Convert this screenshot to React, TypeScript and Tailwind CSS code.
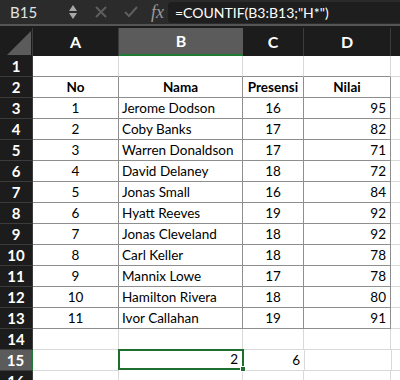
import React from "react";

const rows: [string, string, string, string][] = [
  ["1", "Jerome Dodson", "16", "95"],
  ["2", "Coby Banks", "17", "82"],
  ["3", "Warren Donaldson", "17", "71"],
  ["4", "David Delaney", "18", "72"],
  ["5", "Jonas Small", "16", "84"],
  ["6", "Hyatt Reeves", "19", "92"],
  ["7", "Jonas Cleveland", "18", "92"],
  ["8", "Carl Keller", "18", "78"],
  ["9", "Mannix Lowe", "17", "78"],
  ["10", "Hamilton Rivera", "18", "80"],
  ["11", "Ivor Callahan", "19", "91"],
];

const W = ["w-[86px]", "w-[124px]", "w-[61px]", "w-[87px]"];

function RowHead({ n, sel }: { n: number; sel?: boolean }) {
  return (
    <div
      className={
        "w-[33px] shrink-0 h-full flex items-center justify-center font-bold text-[15px] text-white border-b border-[#3c3c3c] " +
        (sel ? "bg-[#5b5b5b] border-r-2 border-r-[#1f7a34]" : "bg-[#1c1c1c] border-r border-r-[#3c3c3c]")
      }
    >
      {n}
    </div>
  );
}

export default function App() {
  const light = "border-[#d9d9d9]";
  const dark = "border-[#8e8e8e]";
  return (
    <div
      className="w-[400px] h-[380px] overflow-hidden bg-white select-none"
      style={{ fontFamily: "Lato, 'Noto Sans', sans-serif" }}
    >
      {/* Formula bar */}
      <div className="h-[24px] bg-[#2b2b2b] flex items-center">
        <div className="w-[66px] pl-[10px] text-[15px] text-[#e2e2e2]">B15</div>
        <div className="flex flex-col items-center justify-center w-[14px] gap-[2px]">
          <svg width="8" height="6" viewBox="0 0 8 6"><path d="M4 0L8 6H0Z" fill="#a8a8a8" /></svg>
          <svg width="8" height="6" viewBox="0 0 8 6"><path d="M0 0H8L4 6Z" fill="#a8a8a8" /></svg>
        </div>
        <svg width="12" height="12" viewBox="0 0 12 12" className="ml-[15px]">
          <path d="M1 1L11 11M11 1L1 11" stroke="#5e5e5e" strokeWidth="2" />
        </svg>
        <svg width="14" height="12" viewBox="0 0 14 12" className="ml-[17px]">
          <path d="M1 6L5 10L13 1" stroke="#5e5e5e" strokeWidth="2" fill="none" />
        </svg>
        <div
          className="ml-[13px] text-[18px] italic text-[#9a9a9a] leading-none"
          style={{ fontFamily: "'Liberation Serif', serif" }}
        >
          fx
        </div>
        <div className="ml-[4px] flex-1 h-[21px] bg-[#1e1e1e] rounded-l-[4px] flex items-center pl-[7px] text-[14px] text-white">
          =COUNTIF(B3:B13;"H*")
        </div>
      </div>
      <div className="h-[2px] bg-[#555555]" />
      <div className="h-[2px] bg-[#1c1c1c]" />
      {/* Column header */}
      <div className="h-[28px] flex bg-[#1c1c1c]">
        <div className="w-[33px] shrink-0 border-r border-[#3c3c3c] flex items-end justify-end pr-[1px] pb-[1px] h-[28px]">
          <svg width="24" height="24" viewBox="0 0 24 24"><path d="M24 0V24H0Z" fill="#5b5b5b" /></svg>
        </div>
        {["A", "B", "C", "D"].map((c, i) => (
          <div
            key={c}
            className={
              W[i] +
              " shrink-0 h-full flex items-center justify-center font-bold text-[16px] text-white " +
              (c === "B" ? "bg-[#5b5b5b] border-b-2 border-[#1f7a34]" : "border-r border-[#3c3c3c]")
            }
          >
            {c}
          </div>
        ))}
        <div className="flex-1" />
      </div>
      {/* Rows */}
      {Array.from({ length: 16 }).map((_, ri) => {
        const r = ri + 1;
        const inTable = r >= 2 && r <= 13;
        const cells: React.ReactNode[] = [];
        for (let ci = 0; ci < 4; ci++) {
          let content: React.ReactNode = null;
          let align = "justify-center";
          let bold = "";
          if (r === 2) {
            content = ["No", "Nama", "Presensi", "Nilai"][ci];
            bold = "font-bold";
          } else if (r >= 3 && r <= 13) {
            const d = rows[r - 3];
            content = d[ci];
            if (ci === 1) align = "justify-start pl-[3px]";
            if (ci === 3) align = "justify-end pr-[4px]";
          } else if (r === 15) {
            if (ci === 1) {
              content = "2";
              align = "justify-end pr-[4px]";
            }
            if (ci === 2) {
              content = "6";
              align = "justify-end pr-[4px]";
            }
          }
          const sel = r === 15 && ci === 1;
          cells.push(
            <div
              key={ci}
              className={
                W[ci] +
                " shrink-0 h-full relative flex items-center whitespace-nowrap text-[13.5px] text-black border-r border-b " +
                align +
                " " +
                bold +
                " " +
                (inTable ? dark : light) +
                " " +
                (r === 1 ? "border-b-[#8e8e8e]" : "") +
                (sel ? " !border-2 !border-[#1e6e2d] -ml-[1px] -mt-[1px] h-[22px] w-[126px]" : "")
              }
            >
              {content}
              {sel && (
                <div className="absolute -right-[4px] -bottom-[4px] w-[6px] h-[6px] bg-[#1e6e2d] border border-white z-10" />
              )}
            </div>
          );
        }
        return (
          <div key={r} className="h-[21px] flex">
            <RowHead n={r} sel={r === 15} />
            {cells}
            <div className={"flex-1 border-b " + light} />
          </div>
        );
      })}
    </div>
  );
}
